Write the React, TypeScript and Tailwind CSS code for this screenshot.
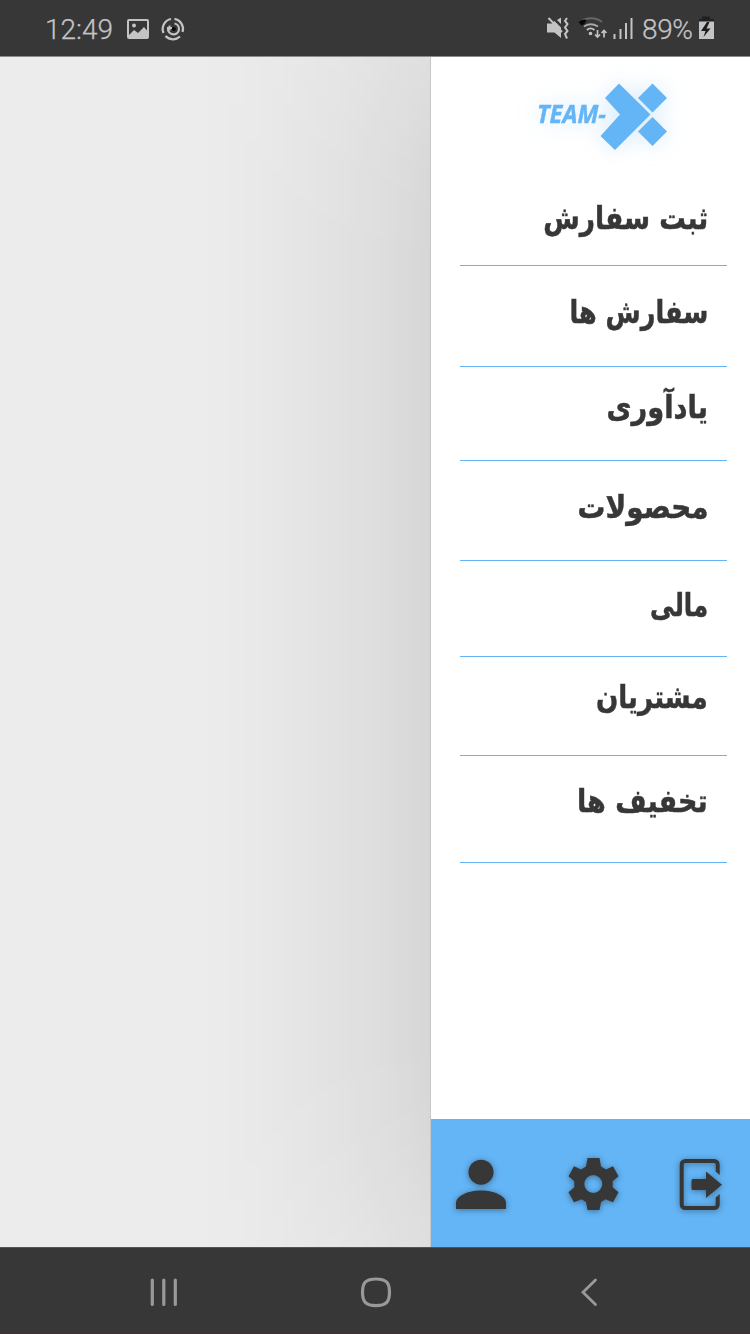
const menuItems = [
  { label: 'ثبت سفارش', row: 'h-[90px] pt-[24px]', text: 'scale-x-[0.828]' },
  { label: 'سفارش ها', row: 'h-[101px] pt-[28px]', text: 'scale-x-[0.797]' },
  { label: 'یادآوری', row: 'h-[94px] pt-[22px]', text: 'scale-x-[0.852]' },
  { label: 'محصولات', row: 'h-[100px] pt-[28px]', text: 'scale-x-[0.87]' },
  { label: 'مالی', row: 'h-[96px] pt-[26px]', text: 'scale-x-[0.765]' },
  { label: 'مشتریان', row: 'h-[99px] pt-[22px]', text: 'scale-x-[0.818]' },
  { label: 'تخفیف ها', row: 'h-[107px] pt-[27px]', text: 'scale-x-[0.845]' },
];

function StatusBar() {
  return (
    <header className="h-[57px] shrink-0 border-b border-[#8b8b8b] bg-[#373737]">
      <svg width="750" height="56" viewBox="0 0 750 56" fill="none" className="block">
        <g fill="#c4c4c4" fontFamily="Roboto, sans-serif" fontWeight="300" fontSize="28" stroke="#c4c4c4" strokeWidth="0.25">
          <text x="45" y="39" textLength="68">12:49</text>
          <text x="642" y="39" textLength="51">89%</text>
        </g>
        <path fill="#c4c4c4" fillRule="evenodd" d="M129 19h18a2 2 0 0 1 2 2v16a2 2 0 0 1-2 2h-18a2 2 0 0 1-2-2V21a2 2 0 0 1 2-2Zm0 2v14l5-5 4 3 6-6 3 3.500V21Z" />
        <circle cx="134" cy="25.500" r="2" fill="#c4c4c4" />
        <g stroke="#c4c4c4" strokeWidth="2.200">
          <path d="M171 19A10.200 10.200 0 0 0 163.500 33M165.500 36A10.200 10.200 0 0 0 180 36.500" />
          <path d="M174.500 18.800A10.300 10.300 0 0 1 182.500 32" />
          <path d="M174.500 23.500A5.500 5.500 0 1 1 168 28.500" />
          <path d="M169.500 25.500v5M167 28h5" strokeWidth="2" />
        </g>
        <circle cx="173.800" cy="29" r="2" fill="#080808" />
        <path fill="#c4c4c4" d="M547 23.500h5l2.500-2.500 6.500 6.500V38l-6.500-5.500H547Z" />
        <path fill="#c4c4c4" d="m557 20 4-2.500v6.500Z" />
        <path d="m548.500 18 13.500 14" stroke="#c4c4c4" strokeWidth="2" />
        <path d="m567 18-2 3 2.500 3-2.500 3.500 2.500 3.500-2.500 3 2 4.500" stroke="#c4c4c4" strokeWidth="2" />
        <path d="M580 22c6-5 16-5 22 0" stroke="#666" strokeWidth="2" />
        <path fill="#070707" d="M578.500 22c3-3 7-3 8-2l-2 4-3 1.500Z" />
        <path d="M584 26.500c4-3 9-3 14 0" stroke="#a9a9a9" strokeWidth="2" />
        <path d="M587 30c2-2 5-2 7.500 0" stroke="#c4c4c4" strokeWidth="1.800" />
        <circle cx="590.500" cy="33.500" r="1.800" fill="#c4c4c4" />
        <path d="M597.500 30v7m-2.500-2.500 2.500 2.500 2.500-2.500M604 37.500v-7m-2.500 2.500 2.500-2.500 2.500 2.500" stroke="#c4c4c4" strokeWidth="1.700" />
        <path d="M614.500 34v5M620.500 29v10M626 23v16M631.500 18v21" stroke="#c4c4c4" strokeWidth="2" />
        <path fill="#202020" d="M702 16.500h8V19h4v3h-15v-3h3Z" />
        <path fill="#c4c4c4" d="M699 21.500h15V39h-15Z" />
        <path fill="#1c1c1c" d="m707 22-6 9h4.500l-2 6 7-8.500h-4l3-6.500Z" />
      </svg>
    </header>
  );
}

function Logo() {
  return (
    <svg width="319" height="119" viewBox="431 57 319 119" className="block shrink-0 drop-shadow-[0_0_11px_rgba(100,180,246,0.28)]">
      <g fill="#64b5f6">
        <text x="537" y="123" fontSize="25" fontFamily="Open Sans, sans-serif" fontWeight="700" fontStyle="italic" stroke="#64b5f6" strokeWidth="0.4" textLength="69" lengthAdjust="spacingAndGlyphs">
          TEAM-
        </text>
        <path d="M619 83.500 650.500 114.500 615 150 600.500 136 620 114.500 605 98Z" />
        <path d="M652.500 83.500 667 98 652.500 112.500 638 98Z" />
        <path d="M652.500 117 667 131.500 652.500 146 638 131.500Z" />
      </g>
    </svg>
  );
}

function ActionBar() {
  return (
    <div className="mt-auto h-[128px] bg-[#64b5f6]">
      <svg width="319" height="128" viewBox="431 1119 319 128" className="block">
        <g fill="#373737" className="drop-shadow-[0_1px_3px_rgba(0,0,0,0.4)]">
          <circle cx="481" cy="1172.200" r="12.500" />
          <path d="M456 1209v-6c0-7 12-12.500 25-12.500s25 5.500 25 12.500v6Z" />
          <path
            fillRule="evenodd"
            d="M587.500 1158h12l1.500 8.500 5 3 7-3.200 5.500 10-5.800 5v6l5.800 5-5.500 10-7.500-3-4.500 2.800-1.500 7.900h-12l-1.500-7.900-4.500-2.800-7.500 3-5.500-10 5.800-5v-6l-5.800-5 5.500-10 7 3.200 5-3ZM593.300 1175a9 9 0 1 0 0 18 9 9 0 0 0 0-18Z"
          />
          <path d="M693 1179h13v-7.500l16 13.200-16 13.300v-8h-13a1.500 1.500 0 0 1-1.500-1.500v-8a1.500 1.500 0 0 1 1.500-1.500Z" />
          <path fill="none" stroke="#373737" strokeWidth="4" d="M717.700 1171.500v-7a3.500 3.500 0 0 0-3.500-3.500h-29a3.500 3.500 0 0 0-3.500 3.500v40a3.500 3.500 0 0 0 3.500 3.500h29a3.500 3.500 0 0 0 3.500-3.500v-6.500" />
          <path d="M715.700 1171h4v4l-4-3.500ZM715.700 1198.500v-1l4-3.500v4.500Z" />
        </g>
      </svg>
    </div>
  );
}

function NavigationBar() {
  return (
    <footer className="h-[87px] shrink-0 border-t border-[#515558] bg-[#373737]">
      <svg width="750" height="86" viewBox="0 1248 750 86" fill="none" stroke="#999" strokeWidth="3.200" strokeLinecap="round" className="block">
        <path d="M152.300 1280v24.500M163.800 1280v24.500M175.300 1280v24.500" />
        <path d="M376 1279c10 0 13.500 3.500 13.500 13.300s-3.500 13.300-13.500 13.300-13.500-3.500-13.500-13.300 3.500-13.300 13.500-13.300Z" />
        <path d="m595.500 1280-12.500 12.300 12.500 12.200" strokeWidth="2.800" />
        <path d="M0 1333.500h750" stroke="#3c3239" strokeWidth="2" />
      </svg>
    </footer>
  );
}

export default function App() {
  return (
    <div className="flex h-[1334px] w-[750px] flex-col overflow-hidden bg-[#ececec]">
      <StatusBar />
      <main className="flex min-h-0 flex-1 overflow-hidden">
        <div className="flex-1 bg-[linear-gradient(to_right,rgba(0,0,0,0)_195px,rgba(0,0,0,0.005)_220px,rgba(0,0,0,0.012)_255px,rgba(0,0,0,0.026)_300px,rgba(0,0,0,0.043)_345px,rgba(0,0,0,0.062)_385px,rgba(0,0,0,0.09)_430px)] [mask-image:linear-gradient(to_bottom,rgba(0,0,0,0.62),rgba(0,0,0,0.78)_60px,rgba(0,0,0,0.9)_115px,black_210px,black_calc(100%-210px),rgba(0,0,0,0.9)_calc(100%-115px),rgba(0,0,0,0.78)_calc(100%-60px),rgba(0,0,0,0.62))]" />
        <aside className="flex w-[320px] flex-col border-l border-[#c8c8c8] bg-white">
          <Logo />
          <nav>
            <ul className="mr-[23px] ml-[29px]" dir="rtl">
              {menuItems.map((item) => (
                <li key={item.label} className={`${item.row} border-b border-[#64b5f6] pr-[19px]`}>
                  <span className={`${item.text} block w-fit origin-right font-['DejaVu_Sans',sans-serif] text-[32px] leading-[36px] font-bold whitespace-nowrap text-[#373737] [-webkit-text-stroke:0.5px_#373737]`}>
                    {item.label}
                  </span>
                </li>
              ))}
            </ul>
          </nav>
          <ActionBar />
        </aside>
      </main>
      <NavigationBar />
    </div>
  );
}
